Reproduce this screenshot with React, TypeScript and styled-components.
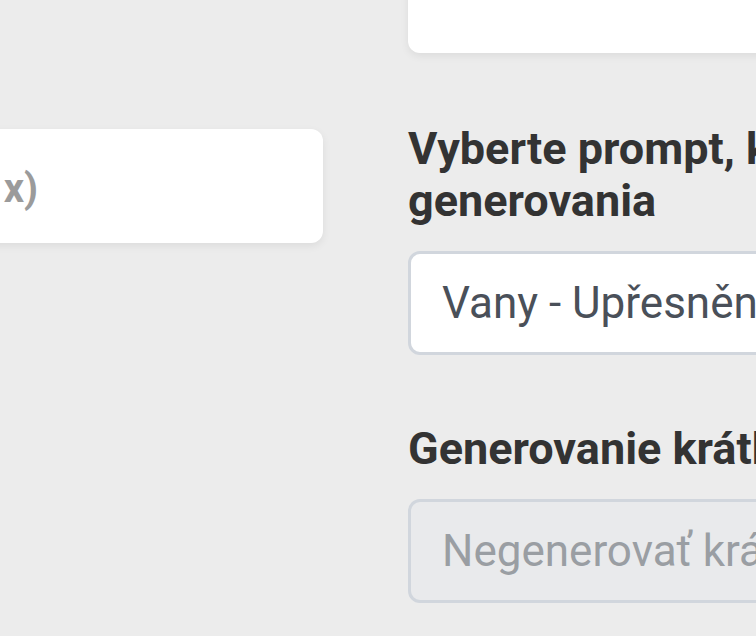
import styled, { createGlobalStyle } from "styled-components"

const GlobalStyle = createGlobalStyle`
  html, body {
    margin: 0;
    padding: 0;
    background: #ececec;
  }
  body {
    font-family: Roboto, "Noto Sans", "Liberation Sans", sans-serif;
  }
`

export default function App() {
  return (
    <>
      <GlobalStyle />
      <Viewport>
        <Layout>
          <LeftColumn>
            <Card>
              <Placeholder>Maximálny počet produktov (napr. 5 x)</Placeholder>
            </Card>
          </LeftColumn>
          <RightColumn>
            <TopCard />
            <Field $offset={70}>
              <Label>Vyberte prompt, ktorý sa použije počas generovania</Label>
              <Select>Vany - Upřesnění parametrů produktu</Select>
            </Field>
            <Field $offset={68}>
              <Label>Generovanie krátkeho popisu</Label>
              <Select $disabled>Negenerovať krátky popis</Select>
            </Field>
          </RightColumn>
        </Layout>
      </Viewport>
    </>
  )
}

const Viewport = styled.div`
  width: 756px;
  height: 636px;
  overflow: hidden;
`

/* the view is zoomed in: the left column runs off the left edge */
const Layout = styled.div`
  display: grid;
  grid-template-columns: 1010px 950px;
  column-gap: 85px;
  margin-left: -687px;
  align-items: start;
`

const LeftColumn = styled.div`
  padding-top: 129px;
`

const Card = styled.div`
  box-sizing: border-box;
  height: 114px;
  display: flex;
  align-items: center;
  padding: 4px 36px 0;
  background: #ffffff;
  border-radius: 12px;
  box-shadow: 0 3px 8px rgba(0, 0, 0, 0.07);
`

const Placeholder = styled.span`
  font-size: 40px;
  font-weight: 700;
  color: #9b9b9b;
  white-space: nowrap;
`

const RightColumn = styled.div`
  display: flex;
  flex-direction: column;
`

const TopCard = styled.div`
  height: 120px;
  margin-top: -67px;
  background: #ffffff;
  border-radius: 12px;
  box-shadow: 0 3px 8px rgba(0, 0, 0, 0.07);
`

const Field = styled.div<{ $offset: number }>`
  display: flex;
  flex-direction: column;
  gap: 24px;
  margin-top: ${({ $offset }) => $offset}px;
`

const Label = styled.div`
  font-size: 45px;
  line-height: 52px;
  font-weight: 700;
  color: #333333;
`

const Select = styled.div<{ $disabled?: boolean }>`
  box-sizing: border-box;
  height: 104px;
  display: flex;
  align-items: center;
  padding: 0 31px;
  border: 3px solid #d1d6dd;
  border-radius: 12px;
  background: ${({ $disabled }) => ($disabled ? "#e9eaec" : "#ffffff")};
  color: ${({ $disabled }) => ($disabled ? "#9a9ea3" : "#4a5059")};
  font-size: 44px;
  white-space: nowrap;
`
